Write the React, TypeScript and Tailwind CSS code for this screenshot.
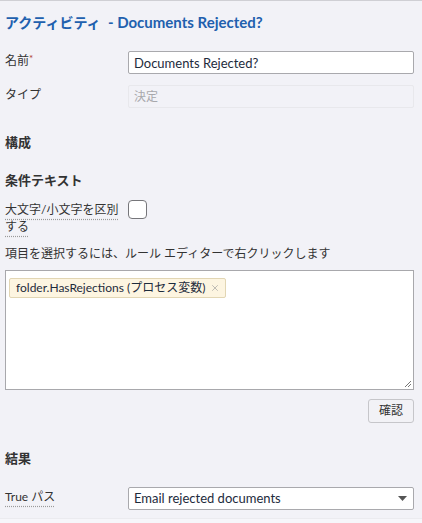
import { X } from 'lucide-react'

const font = { fontFamily: 'Lato, "Noto Sans CJK JP", sans-serif' }

function Label({ children }: { children: React.ReactNode }) {
  return (
    <div className="w-[123px] shrink-0 text-[12px] leading-[20px] text-[#333]">{children}</div>
  )
}

export default function App() {
  return (
    <div
      style={font}
      className="w-[422px] h-[523px] overflow-hidden bg-[#f2f2f7] border-t border-[#cfcfd4] flex flex-col"
    >
      <div className="flex-1 pl-[5px] pr-[8px]">
        <h1 className="mt-[11px] text-[15px] leading-[20px] font-bold text-[#2160ae]">
          <span className="text-[14px]">アクティビティ</span>&nbsp;&nbsp;- Documents Rejected?
        </h1>

        <div className="mt-[18px] flex items-start">
          <Label>
            名前<span className="text-[#b03a2e] align-top text-[10px] leading-[14px]">*</span>
          </Label>
          <input
            readOnly
            value="Documents Rejected?"
            className="w-[286px] h-[23px] px-[5px] bg-white border border-[#a9a9ad] rounded-[2px] text-[13px] text-[#1d2b3c] outline-none"
          />
        </div>

        <div className="mt-[11px] flex items-start">
          <Label>タイプ</Label>
          <div className="w-[286px] h-[23px] px-[5px] border border-[#e8e8ec] rounded-[2px] text-[12px] leading-[21px] text-[#a8a8ac]">
            決定
          </div>
        </div>

        <h2 className="mt-[24px] text-[13px] leading-[20px] font-bold text-[#333]">構成</h2>
        <h2 className="mt-[18px] text-[13px] leading-[20px] font-bold text-[#333]">条件テキスト</h2>

        <div className="mt-[10px] flex items-start">
          <div className="w-[123px] shrink-0 pt-[1px] text-[12px] leading-[17px] text-[#333]">
            <span className="underline decoration-dotted decoration-[#9a9a9a] underline-offset-[5px]">
              大文字/小文字を区別
            </span>
            <br />
            <span className="underline decoration-dotted decoration-[#9a9a9a] underline-offset-[5px]">
              する
            </span>
          </div>
          <div className="w-[19px] h-[19px] bg-white border border-[#76767a] rounded-[4px]" />
        </div>

        <p className="mt-[10px] text-[12px] leading-[17px] text-[#333]">
          項目を選択するには、ルール エディターで右クリックします
        </p>

        <div className="mt-[8px] w-[409px] h-[120px] bg-white border border-[#a8a8ac] relative p-[3px]">
          <span className="inline-flex items-center h-[20px] pl-[6px] pr-[5px] gap-[5px] bg-[#fdf5e1] border border-[#e2d6b4] rounded-[2px] text-[12px] text-[#1d2b3c]">
            folder.HasRejections (プロセス変数)
            <X className="w-[10px] h-[10px] text-[#9a9a9a]" strokeWidth={1.5} />
          </span>
          <svg className="absolute right-[1px] bottom-[1px]" width="9" height="9" viewBox="0 0 9 9">
            <path d="M8 2L2 8M8 5L5 8" stroke="#777" strokeWidth="1" />
          </svg>
        </div>

        <div className="mt-[9px] flex justify-end">
          <button className="w-[46px] h-[24px] bg-[#f2f2f6] border border-[#c6c6ca] rounded-[3px] text-[12px] text-[#333]">
            確認
          </button>
        </div>

        <h2 className="mt-[25px] text-[13px] leading-[20px] font-bold text-[#333]">結果</h2>

        <div className="mt-[19px] flex items-start">
          <div className="w-[123px] shrink-0 text-[12px] leading-[20px] text-[#333]">
            <span className="underline decoration-dotted decoration-[#9a9a9a] underline-offset-[5px]">
              True パス
            </span>
          </div>
          <div className="w-[286px] h-[23px] px-[5px] flex items-center justify-between bg-white border border-[#a9a9ad] rounded-[2px] text-[13px] text-[#1d2b3c]">
            <span>Email rejected documents</span>
            <svg width="9" height="5" viewBox="0 0 9 5" className="mr-[1px]">
              <path d="M0 0H9L4.5 5Z" fill="#555" />
            </svg>
          </div>
        </div>
      </div>
      <div className="h-[5px] bg-[#f6f6fa] border-t border-[#ebebef]" />
    </div>
  )
}
